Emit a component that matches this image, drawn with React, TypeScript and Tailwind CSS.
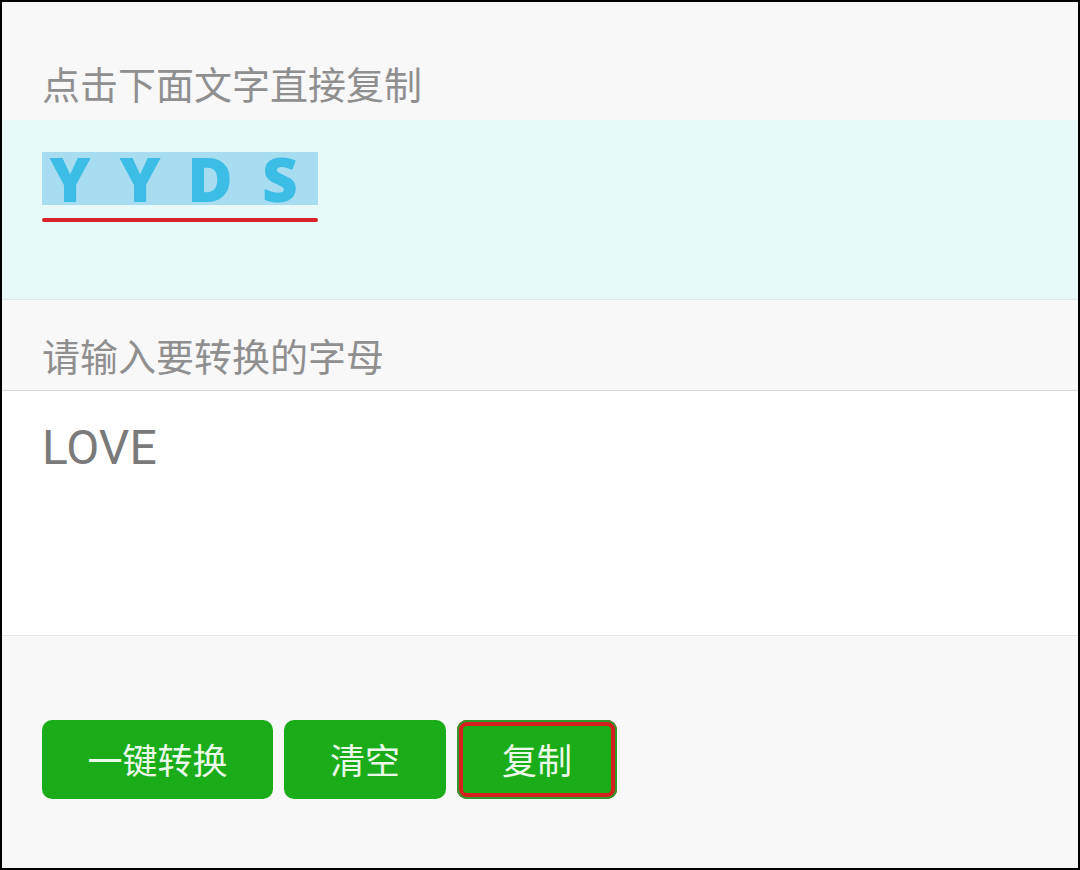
import { useState } from "react";

const cjk = "font-['Noto_Sans_CJK_SC','Noto_Sans',sans-serif]";

export default function App() {
  const [input, setInput] = useState("LOVE");
  const [output, setOutput] = useState("YYDS");

  return (
    <div className={`w-[1080px] h-[870px] border-2 border-black bg-[#f8f8f8] flex flex-col overflow-hidden ${cjk}`}>
      {/* result label */}
      <div className="pt-[59px] pb-[15px] px-[40px]">
        <div className="text-[38px] leading-[44px] text-[#8f8f8f]">点击下面文字直接复制</div>
      </div>

      {/* result */}
      <div className="h-[180px] bg-[#e8f9fa] border-b border-[#dde9eb] px-[40px] pt-[32px]">
        <div className="w-[276px] h-[53px] bg-[#a7dcf1] flex">
          <div className="flex -ml-[7px]">
            {output.split("").map((ch, i) => (
              <span
                key={i}
                className="w-[70px] text-center font-['Open_Sans',sans-serif] font-extrabold text-[62px] leading-[53px] text-[#3bbde6]"
              >
                {ch}
              </span>
            ))}
          </div>
        </div>
        <div className="mt-[13px] w-[276px] h-[4px] rounded-full bg-[#d9232a]" />
      </div>

      {/* input label */}
      <div className="h-[91px] border-b border-[#d9d9d9] px-[40px] pt-[33px]">
        <div className="text-[38px] leading-[44px] text-[#8f8f8f]">请输入要转换的字母</div>
      </div>

      {/* input */}
      <div className="h-[245px] bg-white border-b border-[#e6e6e6] px-[40px] pt-[29px]">
        <textarea
          value={input}
          onChange={(e) => setInput(e.target.value)}
          className="w-full h-[180px] resize-none outline-none bg-transparent font-['Roboto',sans-serif] text-[48px] leading-[56px] text-[#7a7a7a]"
        />
      </div>

      {/* actions */}
      <div className="flex gap-[11px] px-[40px] pt-[84px]">
        <button
          onClick={() => setOutput(input.toUpperCase().replace(/\s/g, ""))}
          className="w-[231px] h-[79px] rounded-[10px] bg-[#1aad19] text-[35px] text-[#ecf8e9]"
        >
          一键转换
        </button>
        <button
          onClick={() => setInput("")}
          className="w-[162px] h-[79px] rounded-[10px] bg-[#1aad19] text-[35px] text-[#ecf8e9]"
        >
          清空
        </button>
        <button className="w-[160px] h-[79px] rounded-[10px] bg-[#1aad19] text-[35px] text-[#ecf8e9] shadow-[inset_0_0_0_2px_#2f9a2a,inset_0_0_0_6px_#d4211f]">
          复制
        </button>
      </div>
    </div>
  );
}
